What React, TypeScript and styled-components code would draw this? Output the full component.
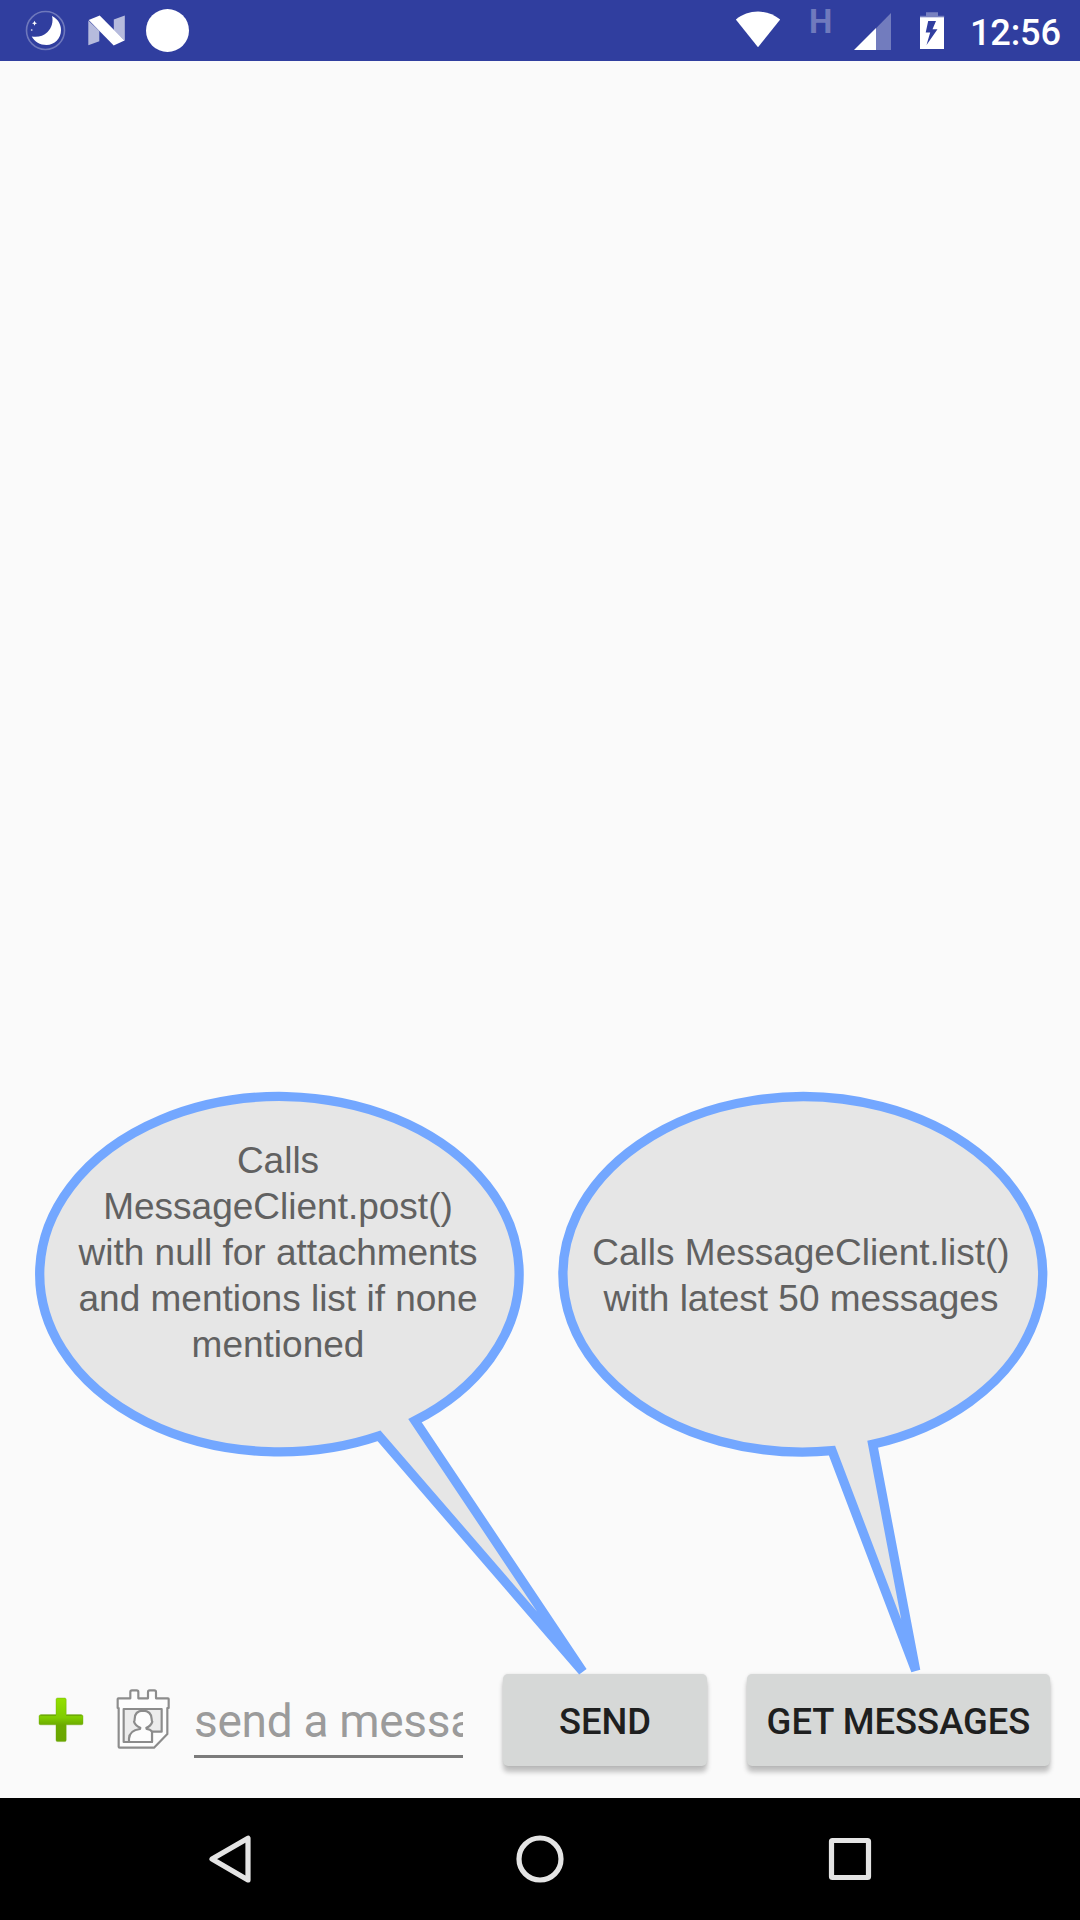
import React from 'react';
import styled, { createGlobalStyle } from 'styled-components';

const GlobalStyle = createGlobalStyle`
  * { box-sizing: border-box; }
  html, body { margin: 0; padding: 0; background: #fafafa; }
  body { font-family: Roboto, "Liberation Sans", sans-serif; overflow: hidden; }
  svg { display: block; flex: none; }
`;

const Screen = styled.div`
  display: flex;
  flex-direction: column;
  width: 1080px;
  height: 1920px;
  background: #fafafa;
`;

const StatusBar = styled.header`
  display: flex;
  justify-content: space-between;
  flex: none;
  height: 61px;
  padding: 0 19px 0 25px;
  background: #303e9f;
  color: #fff;
`;

const StatusGroup = styled.div`
  display: flex;
  align-items: flex-start;
`;

const NotificationGroup = styled(StatusGroup)`
  gap: 20px;
`;

const NetworkType = styled.span`
  width: 24px;
  margin: 2px 21px 0 28px;
  font-size: 33px;
  font-weight: 700;
  line-height: 39px;
  color: rgba(255, 255, 255, 0.32);
`;

const Clock = styled.time`
  margin-left: 25px;
  padding-top: 11px;
  width: 91px;
  font-size: 36.2px;
  font-weight: 500;
  line-height: 43px;
  letter-spacing: -0.2px;
  white-space: nowrap;
`;

const Main = styled.main`
  display: flex;
  flex-direction: column;
  justify-content: flex-end;
  flex: 1;
  min-height: 0;
`;

const Callouts = styled.section`
  display: flex;
  gap: 34px;
  height: 586px;
  padding-left: 35px;
  margin-bottom: -4px;
  z-index: 1;
`;

const Callout = styled.figure`
  display: grid;
  width: 489px;
  margin: 0;
`;

const CalloutShape = styled.svg`
  grid-area: 1 / 1;
  overflow: visible;
`;

const CalloutText = styled.figcaption<{ $top: number }>`
  grid-area: 1 / 1;
  padding: ${(p) => p.$top}px 3px 0 0;
  font-family: "Liberation Sans", Arial, sans-serif;
  font-size: 37px;
  line-height: 46.1px;
  text-align: center;
  white-space: pre-line;
  color: #616161;
`;

const Composer = styled.form`
  display: flex;
  align-items: flex-start;
  flex: none;
  height: 124px;
  padding-left: 38px;
`;

const IconButton = styled.button<{ $width: number; $gap: number }>`
  width: ${(p) => p.$width}px;
  height: 92px;
  margin: 0 ${(p) => p.$gap}px 0 0;
  padding: 0;
  border: 0;
  background: none;
`;

const MessageInput = styled.input`
  width: 269px;
  height: 84px;
  margin: 0 40px 0 0;
  padding: 12px 0 0;
  border: 0;
  border-bottom: 3px solid #7b7b7b;
  border-radius: 0;
  outline: 0;
  background: none;
  font-family: Roboto, sans-serif;
  font-size: 46px;
  letter-spacing: -0.3px;
  &::placeholder { color: #9b9b9b; opacity: 1; }
`;

const ActionButton = styled.button<{ $width: number }>`
  flex: none;
  width: ${(p) => p.$width}px;
  height: 92px;
  margin: 0 40px 0 0;
  padding: 2px 0 0;
  border: 0;
  border-radius: 5px;
  background: #d6d8d7;
  box-shadow: 0 6px 5px rgba(0, 0, 0, 0.24), 0 0 3px rgba(0, 0, 0, 0.1);
  font-family: Roboto, sans-serif;
  font-size: 36.4px;
  font-weight: 500;
  white-space: nowrap;
  color: #1e1f1f;
`;

const NavigationBar = styled.nav`
  display: flex;
  align-items: center;
  justify-content: space-between;
  flex: none;
  height: 122px;
  padding: 0 206px;
  background: #000;
`;

const NavIcon = styled.svg`
  width: 50px;
  height: 50px;
  fill: none;
  stroke: #e4e4e4;
  stroke-width: 5.2;
`;

const BatterySvg = styled.svg`
  margin-left: 27px;
`;

const Moon = () => (
  <svg width="42" height="61" viewBox="25 0 42 61">
    <circle cx="45.5" cy="30.5" r="19" fill="none" stroke="#fff" strokeOpacity=".3" strokeWidth="1.6" />
    <path d="M52 16C58 19 61 24.500 61 30.200c0 8.200-6.500 14.700-14.500 14.700-6.500 0-12-3.300-14.800-8.500 6 .9 11.600-.2 15.600-4.200 4.400-4.300 6.200-10.400 4.700-16.200z" fill="#fff" />
    <path d="M34.500 20.800l.8 1.700 1.700.8-1.700.8-.8 1.700-.8-1.700-1.700-.8 1.700-.8z" fill="#fff" />
    <circle cx="31.700" cy="30" r=".9" fill="#fff" fillOpacity=".65" />
  </svg>
);

const Nougat = () => (
  <svg width="39" height="61" viewBox="87 0 39 61">
    <path d="M88.300 20.500L99.300 31v10.300l-11 4z" fill="#fff" fillOpacity=".65" />
    <path d="M113.800 19.500l11-3.900v25.200L113.800 30z" fill="#fff" fillOpacity=".65" />
    <path d="M88.700 20l11-4.400 24.800 25-10.800 4.800z" fill="#fff" />
  </svg>
);

const Dot = () => (
  <svg width="44" height="61" viewBox="0 0 44 61">
    <circle cx="21.500" cy="30.500" r="21.500" fill="#fff" />
  </svg>
);

const Wifi = () => (
  <svg width="45" height="61" viewBox="737 0 45 61">
    <path d="M759 47.300L736.800 19.600c6.200-5 13.900-8 22.200-8s16 3 22.200 8z" fill="#fff" />
  </svg>
);

const Signal = () => (
  <svg width="38" height="61" viewBox="854 0 38 61">
    <path d="M876 28.300L891 13v37h-15z" fill="#fff" fillOpacity=".32" />
    <path d="M854 50L876 28v22z" fill="#fff" />
  </svg>
);

const Battery = () => (
  <BatterySvg width="26" height="61" viewBox="919 0 26 61">
    <path d="M926 12.300h12v3.500h6.200v1.700H920v-1.700h6z" fill="#fff" fillOpacity=".35" />
    <path fillRule="evenodd" d="M920 17.300h24V49h-24zM928.200 21l-2.500 11.500h4.500L926.500 45 937.500 29.200h-5l3.500-8.200z" fill="#fff" />
  </BatterySvg>
);

const AddIcon = () => (
  <svg width="46" height="92" viewBox="38 1674 46 92">
    <defs>
      <linearGradient id="leaf" x1="0" y1="0" x2="0" y2="1">
        <stop offset="0" stopColor="#93e000" />
        <stop offset=".45" stopColor="#80cc00" />
        <stop offset=".62" stopColor="#6caa00" />
        <stop offset="1" stopColor="#6aa600" />
      </linearGradient>
    </defs>
    <path
      d="M57.500 1698h7.200q1.500 0 1.500 1.500v15.300h15.300q1.500 0 1.500 1.500v7q0 1.500-1.500 1.500H66.200v15.300q0 1.500-1.500 1.500h-7.200q-1.500 0-1.500-1.500v-15.300H40.500q-1.500 0-1.500-1.500v-7q0-1.500 1.500-1.500H56v-15.300q0-1.500 1.500-1.500z"
      fill="url(#leaf)" stroke="#69a40a" strokeOpacity=".55" strokeWidth=".7"
    />
    <path d="M40.500 1715.200H56M66.200 1715.200h15.300" stroke="#669d08" strokeWidth="1" />
  </svg>
);

const MentionIcon = () => (
  <svg width="54" height="92" viewBox="288 42 162 276" fill="none" stroke="#8c8c8c" strokeWidth="6.500" strokeLinejoin="round">
    <path d="M293 144v-27q0-2 2-2h36V96q0-5 5-5h14q5 0 5 5v19h29V96q0-5 5-5h14q5 0 5 5v19h36q2 0 2 2v27h-4v78l-40 41H299q-3 0-3-3V144z" fill="#fdfdfd" />
    <path d="M311 147h114v68h-29v31h-85z" fill="#ececec" />
    <path d="M327 246v-10q1-25 33-29l1-4q-15-5-19-18 2-2 2-8 0-24 25-25 25 1 26 25 0 6 2 8-4 14-18 18l1 4q12 1 16 8v31z" fill="#fdfdfd" />
  </svg>
);

interface CalloutProps {
  path: string;
  textTop: number;
  text: string;
  origin: number;
}

const callouts: CalloutProps[] = [
  {
    origin: 35,
    path: 'M379 1435.800A239.700 177.700 0 1 1 415 1420.700L582.700 1671.500Z',
    textTop: 46,
    text: 'Calls\nMessageClient.post()\nwith null for attachments\nand mentions list if none\nmentioned',
  },
  {
    origin: 558,
    path: 'M832 1450.700A239.800 177.700 0 1 1 872.700 1444.300L915.700 1670.700Z',
    textTop: 138.200,
    text: 'Calls MessageClient.list()\nwith latest 50 messages',
  },
];

export default function App() {
  return (
    <>
      <GlobalStyle />
      <Screen>
        <StatusBar>
          <NotificationGroup>
            <Moon />
            <Nougat />
            <Dot />
          </NotificationGroup>
          <StatusGroup>
            <Wifi />
            <NetworkType>H</NetworkType>
            <Signal />
            <Battery />
            <Clock>12:56</Clock>
          </StatusGroup>
        </StatusBar>
        <Main>
          <Callouts>
            {callouts.map((c) => (
              <Callout key={c.origin}>
                <CalloutShape width="489" height="586" viewBox={`${c.origin} 1092 489 586`}>
                  <path d={c.path} fill="#e6e6e6" stroke="#73a7ff" strokeWidth="9.300" strokeMiterlimit="4" />
                </CalloutShape>
                <CalloutText $top={c.textTop}>{c.text}</CalloutText>
              </Callout>
            ))}
          </Callouts>
          <Composer>
            <IconButton type="button" aria-label="Add attachment" $width={46} $gap={32}>
              <AddIcon />
            </IconButton>
            <IconButton type="button" aria-label="Mention a contact" $width={54} $gap={24}>
              <MentionIcon />
            </IconButton>
            <MessageInput placeholder="send a message" />
            <ActionButton type="button" $width={204}>SEND</ActionButton>
            <ActionButton type="button" $width={303}>GET MESSAGES</ActionButton>
          </Composer>
        </Main>
        <NavigationBar>
          <NavIcon viewBox="206 1834 50 50">
            <path d="M248 1838.300v41.600L212 1859z" strokeLinejoin="round" />
          </NavIcon>
          <NavIcon viewBox="515 1834 50 50">
            <circle cx="540" cy="1859" r="21" />
          </NavIcon>
          <NavIcon viewBox="824 1834 50 50">
            <rect x="831.500" y="1840.500" width="37" height="37" rx="1" strokeLinejoin="round" />
          </NavIcon>
        </NavigationBar>
      </Screen>
    </>
  );
}
